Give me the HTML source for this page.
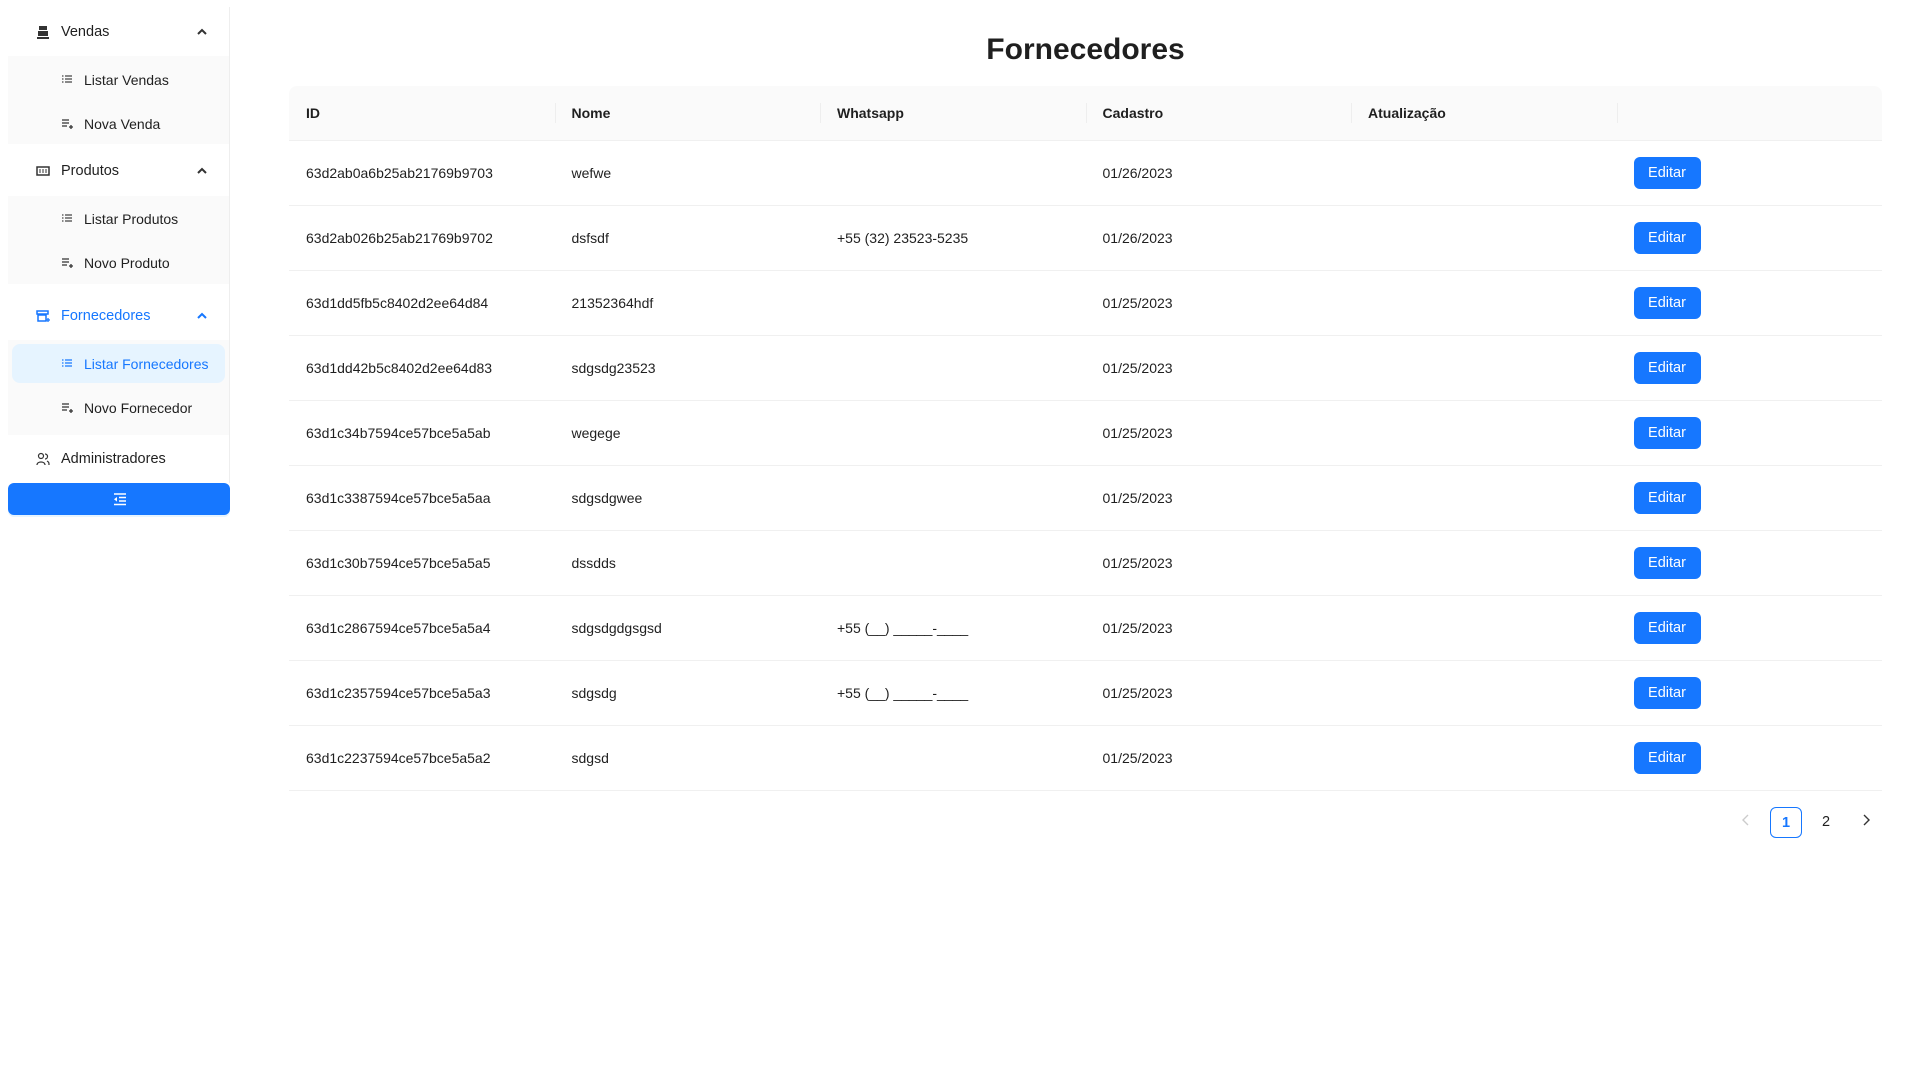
<!DOCTYPE html>
<html><head><meta charset="utf-8"><style>
*{box-sizing:border-box;margin:0;padding:0}
body{width:1920px;height:1080px;background:#fff;font-family:"Liberation Sans",sans-serif;color:rgba(0,0,0,.88);font-size:14px;position:relative;overflow:hidden}
.side{position:absolute;left:8px;top:7px;width:222px;height:476px;border-right:1px solid #eee}
.it{position:absolute;left:0;width:221px;display:flex;align-items:center;height:40px;white-space:nowrap}
.top{padding-left:28px;font-size:14.5px}
.top .ic{width:14px;height:14px;margin-right:11px;display:inline-block}
.chev{position:absolute;left:188px;top:15px}
.sub{position:absolute;left:0;width:221px;background:#fafafa}
.si{padding-left:53px}
.si .ic{width:12px;height:12px;margin-right:11px;display:inline-block}
.sel{background:#e6f4ff;color:#1677ff;border-radius:8px;left:4px;width:213px}
.btn{position:absolute;left:8px;top:483px;width:222px;height:32px;background:#1677ff;border-radius:6px;box-shadow:0 2px 0 rgba(5,145,255,.1)}
h1{position:absolute;left:289px;width:1593px;top:33px;text-align:center;font-size:30px;font-weight:bold;color:rgba(0,0,0,.88)}
table{position:absolute;left:289px;top:86px;width:1593px;border-collapse:collapse;table-layout:fixed}
th{background:#fafafa;height:54px;text-align:left;padding-left:17px;font-weight:bold;position:relative;border-bottom:1px solid #f0f0f0}
th:first-child{border-top-left-radius:8px}th:last-child{border-top-right-radius:8px}
th+th:before{content:"";position:absolute;left:0;top:17px;height:20px;width:1px;background:#eee}
td{height:65px;padding-left:17px;border-bottom:1px solid #f0f0f0}
.e{display:inline-block;background:#1677ff;color:#fff;border-radius:6px;width:67px;height:32px;line-height:32px;text-align:center;font-size:14.5px}
.pg{position:absolute;top:807px;height:31px;line-height:31px;text-align:center;font-size:14.5px}
</style></head><body>
<svg width="0" height="0" style="position:absolute"><defs>
<symbol id="ls" viewBox="0 0 12 12"><path d="M1 2h1.5M1 5h1.5M1 8h1.5M4 2h7M4 5h7M4 8h7" stroke="#444" stroke-width="1.2"/></symbol>
<symbol id="ad" viewBox="0 0 12 12"><path d="M1 2h7M1 5h7M1 8h5M8 9h4M10 7v4" stroke="#333" stroke-width="1.3"/></symbol>
</defs></svg>
<div class="side">
 <div class="it top" style="top:5px"><svg class="ic" viewBox="0 0 14 14"><path d="M3 1h8v4H3z M2 6h10v5H2z M1 12h12v2H1z" fill="#333"/></svg>Vendas<svg class="chev" width="12" height="10" viewBox="0 0 12 10"><path d="M2 7l4-4 4 4" stroke="#333" stroke-width="2" fill="none"/></svg></div>
 <div class="sub" style="top:49px;height:88px">
  <div class="it si" style="top:4px"><svg class="ic"><use href="#ls"/></svg>Listar Vendas</div>
  <div class="it si" style="top:48px"><svg class="ic"><use href="#ad"/></svg>Nova Venda</div>
 </div>
 <div class="it top" style="top:144px"><svg class="ic" viewBox="0 0 14 14"><rect x="1" y="3" width="12" height="8" stroke="#333" stroke-width="1.5" fill="none"/><path d="M4 5v4M7 5v4M10 5v4" stroke="#333"/></svg>Produtos<svg class="chev" width="12" height="10" viewBox="0 0 12 10"><path d="M2 7l4-4 4 4" stroke="#333" stroke-width="2" fill="none"/></svg></div>
 <div class="sub" style="top:189px;height:88px">
  <div class="it si" style="top:3px"><svg class="ic"><use href="#ls"/></svg>Listar Produtos</div>
  <div class="it si" style="top:47px"><svg class="ic"><use href="#ad"/></svg>Novo Produto</div>
 </div>
 <div class="it top" style="top:289px;color:#1677ff"><svg class="ic" viewBox="0 0 14 14"><path d="M1 2h11v3H1z M2 6h8v6H2z" stroke="#1677ff" stroke-width="1.5" fill="none"/><path d="M10 11h4M12 9v4" stroke="#1677ff" stroke-width="1.3"/></svg>Fornecedores<svg class="chev" width="12" height="10" viewBox="0 0 12 10"><path d="M2 7l4-4 4 4" stroke="#1677ff" stroke-width="2" fill="none"/></svg></div>
 <div class="sub" style="top:333px;height:95px">
  <div class="it si sel" style="top:4px;height:39px;padding-left:49px"><svg class="ic" viewBox="0 0 12 12"><path d="M1 2h1.5M1 5h1.5M1 8h1.5M4 2h7M4 5h7M4 8h7" stroke="#1677ff" stroke-width="1.2"/></svg>Listar Fornecedores</div>
  <div class="it si" style="top:48px"><svg class="ic"><use href="#ad"/></svg>Novo Fornecedor</div>
 </div>
 <div class="it top" style="top:432px"><svg class="ic" viewBox="0 0 14 14"><circle cx="5" cy="4" r="2.5" stroke="#333" fill="none" stroke-width="1.2"/><path d="M1 13c0-4 8-4 8 0M9 2a2.5 2.5 0 010 5M11 9c2 1 2 2 2 4" stroke="#333" fill="none" stroke-width="1.2"/></svg>Administradores</div>
</div>
<div class="btn"><svg style="position:absolute;left:105px;top:10px" width="14" height="13" viewBox="0 0 14 13"><path d="M1 1h12M6 4.5h7M6 8h7M1 11.5h12" stroke="#fff" stroke-width="1.4"/><path d="M4 4l-3 2.3L4 8.6z" fill="#fff"/></svg></div>
<h1>Fornecedores</h1>
<table>
<tr><th>ID</th><th>Nome</th><th>Whatsapp</th><th>Cadastro</th><th>Atualização</th><th></th></tr>
<tr><td>63d2ab0a6b25ab21769b9703</td><td>wefwe</td><td></td><td>01/26/2023</td><td></td><td><span class="e">Editar</span></td></tr>
<tr><td>63d2ab026b25ab21769b9702</td><td>dsfsdf</td><td>+55 (32) 23523-5235</td><td>01/26/2023</td><td></td><td><span class="e">Editar</span></td></tr>
<tr><td>63d1dd5fb5c8402d2ee64d84</td><td>21352364hdf</td><td></td><td>01/25/2023</td><td></td><td><span class="e">Editar</span></td></tr>
<tr><td>63d1dd42b5c8402d2ee64d83</td><td>sdgsdg23523</td><td></td><td>01/25/2023</td><td></td><td><span class="e">Editar</span></td></tr>
<tr><td>63d1c34b7594ce57bce5a5ab</td><td>wegege</td><td></td><td>01/25/2023</td><td></td><td><span class="e">Editar</span></td></tr>
<tr><td>63d1c3387594ce57bce5a5aa</td><td>sdgsdgwee</td><td></td><td>01/25/2023</td><td></td><td><span class="e">Editar</span></td></tr>
<tr><td>63d1c30b7594ce57bce5a5a5</td><td>dssdds</td><td></td><td>01/25/2023</td><td></td><td><span class="e">Editar</span></td></tr>
<tr><td>63d1c2867594ce57bce5a5a4</td><td>sdgsdgdgsgsd</td><td>+55 (__) _____-____</td><td>01/25/2023</td><td></td><td><span class="e">Editar</span></td></tr>
<tr><td>63d1c2357594ce57bce5a5a3</td><td>sdgsdg</td><td>+55 (__) _____-____</td><td>01/25/2023</td><td></td><td><span class="e">Editar</span></td></tr>
<tr><td>63d1c2237594ce57bce5a5a2</td><td>sdgsd</td><td></td><td>01/25/2023</td><td></td><td><span class="e">Editar</span></td></tr>
</table>
<div class="pg" style="left:1736px;width:20px"><svg width="10" height="12" viewBox="0 0 10 12"><path d="M7 1L2 6l5 5" stroke="#ccc" stroke-width="1.4" fill="none"/></svg></div>
<div class="pg" style="left:1770px;width:32px;border:1px solid #1677ff;border-radius:6px;color:#1677ff;font-weight:bold">1</div>
<div class="pg" style="left:1810px;width:32px">2</div>
<div class="pg" style="left:1856px;width:20px"><svg width="10" height="12" viewBox="0 0 10 12"><path d="M3 1l5 5-5 5" stroke="#333" stroke-width="1.4" fill="none"/></svg></div>
</body></html>
